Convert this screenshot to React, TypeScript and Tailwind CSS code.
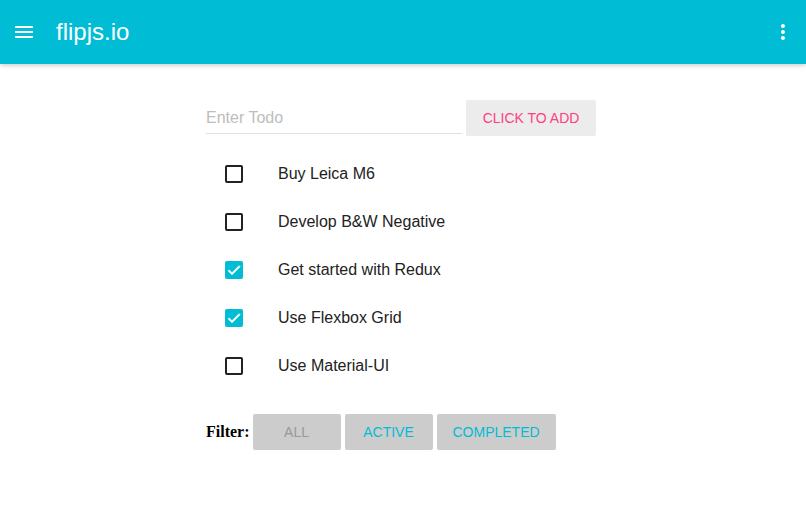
import { useState } from "react";

const todos = [
  { id: 1, text: "Buy Leica M6", done: false },
  { id: 2, text: "Develop B&W Negative", done: false },
  { id: 3, text: "Get started with Redux", done: true },
  { id: 4, text: "Use Flexbox Grid", done: true },
  { id: 5, text: "Use Material-UI", done: false },
];

function MenuIcon() {
  return (
    <svg width="24" height="24" viewBox="0 0 24 24" fill="white">
      <path d="M3 18h18v-2H3v2zm0-5h18v-2H3v2zm0-7v2h18V6H3z" />
    </svg>
  );
}

function MoreVertIcon() {
  return (
    <svg width="24" height="24" viewBox="0 0 24 24" fill="white">
      <path d="M12 8c1.1 0 2-.9 2-2s-.9-2-2-2-2 .9-2 2 .9 2 2 2zm0 2c-1.1 0-2 .9-2 2s.9 2 2 2 2-.9 2-2-.9-2-2-2zm0 6c-1.1 0-2 .9-2 2s.9 2 2 2 2-.9 2-2-.9-2-2-2z" />
    </svg>
  );
}

function Checkbox({ checked }: { checked: boolean }) {
  if (checked) {
    return (
      <span className="flex h-[18px] w-[18px] items-center justify-center rounded-[2px] bg-[#00bcd4]">
        <svg width="16" height="16" viewBox="0 0 24 24" fill="white">
          <path d="M9 16.2L4.8 12l-1.4 1.4L9 19 21 7l-1.4-1.4L9 16.2z" stroke="white" strokeWidth="1.2" />
        </svg>
      </span>
    );
  }
  return <span className="block h-[18px] w-[18px] rounded-[2px] border-2 border-[#222]" />;
}

export default function App() {
  const [filter] = useState("all");

  return (
    <div className="min-h-screen bg-white font-['Liberation_Sans',Arial,sans-serif]">
      <header className="relative z-10 flex h-16 items-center bg-[#00bcd4] shadow-[0_1px_6px_rgba(0,0,0,0.12),0_1px_4px_rgba(0,0,0,0.12)]">
        <button className="ml-3 flex h-6 w-6 items-center">
          <MenuIcon />
        </button>
        <h1 className="ml-5 flex-1 text-2xl leading-[64px] text-white">flipjs.io</h1>
        <button className="mr-[11px] flex h-6 w-6 items-center">
          <MoreVertIcon />
        </button>
      </header>

      <main className="mx-auto w-[394px] pt-9">
        <div className="flex items-start">
          <div className="w-[256px] border-b border-[#e0e0e0] pt-[6px] pb-[3px]">
            <input
              placeholder="Enter Todo"
              className="w-full bg-transparent text-base leading-[24px] text-[#222] outline-none placeholder:text-[#bdbdbd]"
            />
          </div>
          <button className="ml-1 h-9 w-[130px] rounded-[2px] bg-[#ececec] text-sm text-[#ff4081]">
            CLICK TO ADD
          </button>
        </div>

        <ul className="mt-[14px]">
          {todos.map((t) => (
            <li key={t.id} className="flex h-12 items-center">
              <span className="ml-[19px] w-[53px]">
                <Checkbox checked={t.done} />
              </span>
              <span className="text-base text-[#222]">{t.text}</span>
            </li>
          ))}
        </ul>

        <div className="mt-6 flex items-center gap-1">
          <span className="mr-[-1px] font-['Liberation_Serif',serif] text-base font-bold text-black">Filter:</span>
          <button
            disabled={filter === "all"}
            className="h-9 w-[88px] rounded-[2px] bg-[#cccccc] text-sm text-[#999999]"
          >
            ALL
          </button>
          <button className="h-9 w-[88px] rounded-[2px] bg-[#cccccc] text-sm text-[#00bcd4]">ACTIVE</button>
          <button className="h-9 w-[119px] rounded-[2px] bg-[#cccccc] text-sm text-[#00bcd4]">COMPLETED</button>
        </div>
      </main>
    </div>
  );
}
